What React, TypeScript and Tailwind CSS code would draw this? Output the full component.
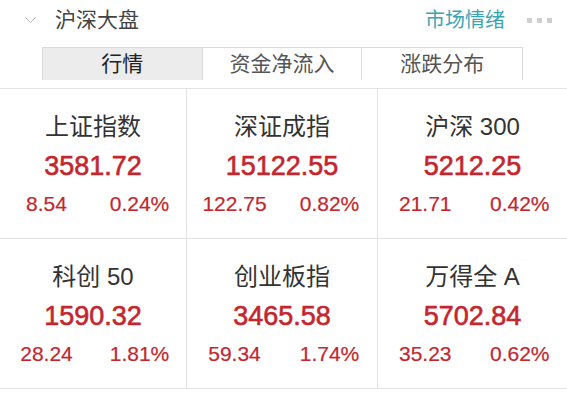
import { ReactNode } from "react";

type IndexQuote = {
  name: ReactNode;
  price: string;
  change: string;
  pct: string;
};

const quotes: IndexQuote[] = [
  { name: "上证指数", price: "3581.72", change: "8.54", pct: "0.24%" },
  { name: "深证成指", price: "15122.55", change: "122.75", pct: "0.82%" },
  { name: "沪深 300", price: "5212.25", change: "21.71", pct: "0.42%" },
  { name: "科创 50", price: "1590.32", change: "28.24", pct: "1.81%" },
  { name: "创业板指", price: "3465.58", change: "59.34", pct: "1.74%" },
  { name: "万得全 A", price: "5702.84", change: "35.23", pct: "0.62%" },
];

const tabs = ["行情", "资金净流入", "涨跌分布"];

function QuoteCell({ quote, index }: { quote: IndexQuote; index: number }) {
  const lastCol = index % 3 === 2;
  return (
    <div
      className={`h-[150px] border-b border-[#e2e2e2] ${
        lastCol ? "" : "border-r"
      } flex flex-col items-center pt-[23px]`}
    >
      <div className="h-[30px] leading-[30px] text-[24px] text-[#333]">
        {quote.name}
      </div>
      <div className="mt-[8px] h-[32px] leading-[32px] text-[27px] text-[#c4262e] [-webkit-text-stroke:0.6px_#c4262e]">
        {quote.price}
      </div>
      <div className="mt-[9px] grid w-full grid-cols-2 h-[26px] leading-[26px] text-[21px] text-[#c4262e] [-webkit-text-stroke:0.2px_#c4262e]">
        <span className="text-center">{quote.change}</span>
        <span className="text-center">{quote.pct}</span>
      </div>
    </div>
  );
}

export default function App() {
  return (
    <div className="w-[567px] h-[413px] overflow-hidden bg-white font-['Liberation_Sans','Noto_Sans_CJK_SC',sans-serif]">
      {/* header bar */}
      <div className="h-10 flex items-center pl-[25px] pr-[15px]">
        <svg width="11" height="7" viewBox="0 0 11 7" className="mt-[1px]">
          <polyline
            points="0.5,0.5 5.5,5.5 10.5,0.5"
            fill="none"
            stroke="#b5b5b5"
            strokeWidth="1"
          />
        </svg>
        <span className="ml-[19px] text-[21px] text-[#444]">沪深大盘</span>
        <span className="ml-auto text-[20px] text-[#3ba4b2]">市场情绪</span>
        <div className="ml-[22px] flex gap-[5px]">
          <span className="w-[5px] h-[5px] bg-[#cfcfcf]" />
          <span className="w-[5px] h-[5px] bg-[#cfcfcf]" />
          <span className="w-[5px] h-[5px] bg-[#cfcfcf]" />
        </div>
      </div>

      {/* segmented tabs */}
      <div className="mt-[7px] ml-[42px] w-[481px] h-[33px] grid grid-cols-3 border border-[#dadada]">
        {tabs.map((t, i) => (
          <div
            key={t}
            className={`flex items-center justify-center text-[21px] ${
              i === 0 ? "bg-[#ececec] text-[#222]" : "bg-white text-[#555]"
            } ${i < 2 ? "border-r border-[#dadada]" : ""}`}
          >
            {t}
          </div>
        ))}
      </div>

      {/* index grid */}
      <div className="mt-[8px] border-t border-[#e2e2e2] grid grid-cols-[187px_191px_189px]">
        {quotes.map((q, i) => (
          <QuoteCell key={i} quote={q} index={i} />
        ))}
      </div>
    </div>
  );
}
